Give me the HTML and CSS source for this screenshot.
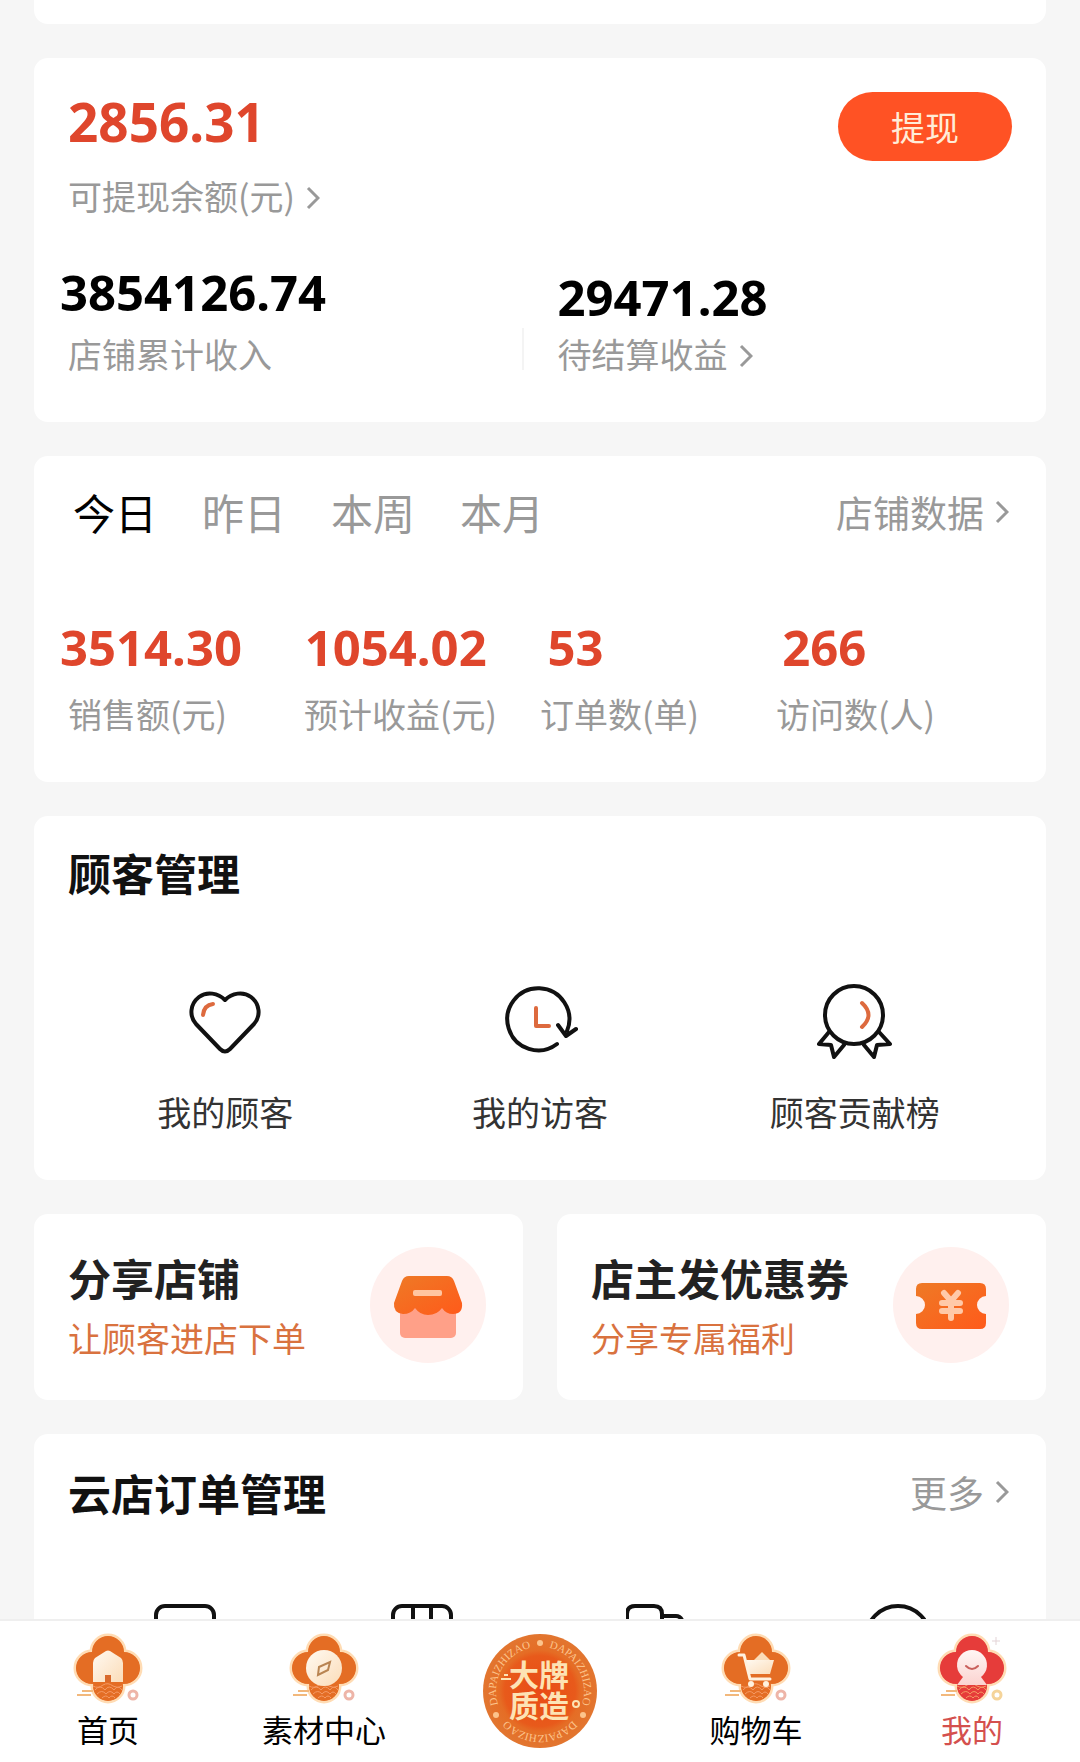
FILE: index.html
```html
<!DOCTYPE html>
<html lang="zh-CN">
<head>
<meta charset="utf-8">
<meta name="viewport" content="width=device-width, initial-scale=1">
<title>我的</title>
<link rel="stylesheet" href="styles.css">
</head>
<body>
<svg class="defs" aria-hidden="true">
  <defs>
    <linearGradient id="cream" x1="0" y1="0" x2="1" y2="1">
      <stop offset="0" stop-color="#fffaf2"/><stop offset="1" stop-color="#fbdcb8"/>
    </linearGradient>
    <linearGradient id="blush" x1="0" y1="0" x2="0" y2="1">
      <stop offset="0" stop-color="#fff6f4"/><stop offset="1" stop-color="#fbd3d0"/>
    </linearGradient>
    <linearGradient id="orange" x1="0" y1="0" x2="1" y2="1">
      <stop offset="0" stop-color="#ee7a26"/><stop offset="1" stop-color="#ff5a1a"/>
    </linearGradient>
    <symbol id="chevron" viewBox="0 0 14 24">
      <path d="M2 2l10 10L2 22" fill="none" stroke="currentColor" stroke-width="3"/>
    </symbol>
    <symbol id="flower" viewBox="0 0 72 72">
      <g fill="currentColor" stroke="#ffdcb4" stroke-width="3">
        <circle cx="36" cy="19" r="17"/><circle cx="20" cy="35" r="17"/><circle cx="52" cy="35" r="17"/><circle cx="36" cy="53" r="16"/>
      </g>
      <g fill="currentColor">
        <circle cx="36" cy="19" r="16"/><circle cx="20" cy="35" r="16"/><circle cx="52" cy="35" r="16"/><circle cx="36" cy="53" r="15"/>
      </g>
      <g fill="none" stroke="#f59a64" stroke-width="1">
        <path d="M23 57q5-6 10 0q4-6 9 0q4-6 8 0M25 61q5-5 9 0q4-5 8 0q3-4 6 0M30 65q4-4 7 0q3-4 6 0M21 53q5 3 10-1q5-3 10 1q5 3 9 0"/>
        <path d="M5 62h14M10 58h11" stroke="#f2b87c" stroke-width="2"/>
      </g>
    </symbol>
  </defs>
</svg>

<main class="content">
  <section class="card card--cut" aria-hidden="true"></section>

  <section class="card card--roomy">
    <div class="balance">
      <div>
        <div class="value value--main">2856.31</div>
        <a class="label balance__label" href="#">可提现余额(元)<svg class="chevron"><use href="#chevron"/></svg></a>
      </div>
      <button class="withdraw" type="button">提现</button>
    </div>
    <div class="totals">
      <div class="totals__item">
        <div class="value value--black outdent">3854126.74</div>
        <div class="label">店铺累计收入</div>
      </div>
      <span class="totals__rule"></span>
      <div class="totals__item totals__item--tight">
        <div class="value value--black">29471.28</div>
        <a class="label" href="#">待结算收益<svg class="chevron"><use href="#chevron"/></svg></a>
      </div>
    </div>
  </section>

  <section class="card">
    <div class="card__head">
      <div class="tabs" role="tablist">
        <button class="tab tab--active" type="button" role="tab" aria-selected="true">今日</button>
        <button class="tab" type="button" role="tab" aria-selected="false">昨日</button>
        <button class="tab" type="button" role="tab" aria-selected="false">本周</button>
        <button class="tab" type="button" role="tab" aria-selected="false">本月</button>
      </div>
      <a class="more" href="#">店铺数据<svg class="chevron"><use href="#chevron"/></svg></a>
    </div>
    <div class="stat-values outdent">
      <div class="value">3514.30</div><div class="value">1054.02</div><div class="value">53</div><div class="value">266</div>
    </div>
    <div class="stat-labels">
      <div class="label">销售额(元)</div><div class="label">预计收益(元)</div><div class="label">订单数(单)</div><div class="label">访问数(人)</div>
    </div>
  </section>

  <section class="card">
    <h2 class="title">顾客管理</h2>
    <div class="entries">
      <a class="entry" href="#">
        <svg class="entry__icon" viewBox="0 0 76 76">
          <path d="M38 16C31 9 20 7 12 13C3 20 2 32 9 40L33 65Q38 70 43 65L67 40C74 32 73 20 64 13C56 7 45 9 38 16Z"/>
          <path d="M16 31Q17 21 26 20" stroke="#dd6a3e"/>
        </svg>
        <span>我的顾客</span>
      </a>
      <a class="entry" href="#">
        <svg class="entry__icon" viewBox="0 0 76 76">
          <path d="M55 60A31 31 0 1 1 65 47M56 41l8 11 10-7"/>
          <path d="M34 24v18h13" stroke="#dd6a3e"/>
        </svg>
        <span>我的访客</span>
      </a>
      <a class="entry" href="#">
        <svg class="entry__icon" viewBox="0 0 76 76">
          <circle cx="37" cy="31" r="29"/>
          <path d="M12 48L2 60l12 1 3 12 10-12M62 48l11 12-13 1-3 12-10-12"/>
          <path d="M45 19Q58 31 45 43" stroke="#dd6a3e"/>
        </svg>
        <span>顾客贡献榜</span>
      </a>
    </div>
  </section>

  <div class="share">
    <a class="card share__card" href="#">
      <span><strong class="title share__title">分享店铺</strong><span class="share__note">让顾客进店下单</span></span>
      <svg class="share__icon" viewBox="0 0 118 118">
        <circle cx="59" cy="59" r="58" fill="#fff0ee"/>
        <rect x="31" y="50" width="56" height="42" rx="5" fill="#ffa088"/>
        <path d="M40 30H78Q83 30 85 35L93 57Q94 68 84 68Q77 68 73 62Q68 69 59 69Q51 69 46 62Q42 68 34 68Q24 67 25 57L33 35Q35 30 40 30Z" fill="url(#orange)"/>
        <rect x="44" y="44" width="29" height="6" rx="2" fill="#ffc5a0"/>
      </svg>
    </a>
    <a class="card share__card" href="#">
      <span><strong class="title share__title">店主发优惠券</strong><span class="share__note">分享专属福利</span></span>
      <svg class="share__icon" viewBox="0 0 118 118">
        <circle cx="59" cy="59" r="58" fill="#fff0ee"/>
        <path d="M30 37H88Q94 37 94 43V50A9 9 0 0 0 94 68V77Q94 83 88 83H30Q24 83 24 77V68A9 9 0 0 0 24 50V43Q24 37 30 37Z" fill="url(#orange)"/>
        <path d="M52 47L59 55L66 47M59 56V72M50 57H68M50 65H68" fill="none" stroke="#ffc9a8" stroke-width="6" stroke-linecap="round"/>
      </svg>
    </a>
  </div>

  <section class="card card--roomy">
    <div class="card__head">
      <h2 class="title">云店订单管理</h2>
      <a class="more" href="#">更多<svg class="chevron"><use href="#chevron"/></svg></a>
    </div>
    <div class="orders">
      <svg class="orders__icon" viewBox="0 0 64 64"><rect x="2" y="2" width="58" height="58" rx="9"/></svg>
      <svg class="orders__icon" viewBox="0 0 64 64"><rect x="3" y="2" width="58" height="58" rx="9"/><path d="M23 2v26M41 2v26"/></svg>
      <svg class="orders__icon" viewBox="0 0 64 64"><path d="M36 50H1V10Q1 2 9 2H28Q36 2 36 10V50M36 12H50Q54 12 56 16L60 30V50H36"/></svg>
      <svg class="orders__icon" viewBox="0 0 64 64"><circle cx="36" cy="34" r="32"/></svg>
    </div>
  </section>
</main>

<nav class="tabbar">
  <a class="tabbar__item" href="#">
    <svg class="tabbar__icon" viewBox="0 0 72 72">
      <use href="#flower"/>
      <path d="M21 30Q21 27 23 25L34 18Q36 17 38 18L49 25Q51 27 51 30V49H21Z" fill="url(#cream)"/>
      <path d="M33 49V42H39V49Z" fill="#d96a2c"/>
      <circle cx="61" cy="62" r="4" fill="none" stroke="#eeb5a8" stroke-width="3"/>
    </svg>
    <span>首页</span>
  </a>
  <a class="tabbar__item" href="#">
    <svg class="tabbar__icon" viewBox="0 0 72 72">
      <use href="#flower"/>
      <circle cx="36" cy="35" r="18" fill="url(#cream)"/>
      <path d="M31 34L42 29L40 37L30 42Z" fill="none" stroke="#b98452" stroke-width="2"/>
      <circle cx="61" cy="62" r="4" fill="none" stroke="#eeb5a8" stroke-width="3"/>
    </svg>
    <span>素材中心</span>
  </a>
  <a class="tabbar__item tabbar__item--center" href="#">
    <svg class="badge" viewBox="0 0 116 116" role="img" aria-label="大牌质造">
      <defs>
        <radialGradient id="seal"><stop offset="0" stop-color="#e94b16"/><stop offset="0.62" stop-color="#e85a1b"/><stop offset="0.72" stop-color="#e56d25"/><stop offset="1" stop-color="#e27630"/></radialGradient>
        <path id="arc1" d="M58 14A44 44 0 0 1 96.100 80"/>
        <path id="arc2" d="M96.100 80A44 44 0 0 1 19.900 80"/>
        <path id="arc3" d="M19.900 80A44 44 0 0 1 58 14"/>
      </defs>
      <circle cx="58" cy="58" r="57" fill="url(#seal)"/>
      <g class="badge__ring">
        <text><textPath href="#arc1" startOffset="50%">DAPAIZHIZAO</textPath></text>
        <text><textPath href="#arc2" startOffset="50%">DAPAIZHIZAO</textPath></text>
        <text><textPath href="#arc3" startOffset="50%">DAPAIZHIZAO</textPath></text>
        <circle cx="58" cy="10" r="3"/><circle cx="101" cy="82" r="3"/><circle cx="14" cy="82" r="3"/>
      </g>
      <path d="M19 46h10M22 42h4" stroke="#fde3b4" stroke-width="2"/>
      <circle cx="94" cy="71" r="3" fill="none" stroke="#fde3b4" stroke-width="2"/>
      <text class="badge__name"><tspan x="57" y="53">大牌</tspan><tspan x="57" y="84">质造</tspan></text>
    </svg>
  </a>
  <a class="tabbar__item" href="#">
    <svg class="tabbar__icon" viewBox="0 0 72 72">
      <use href="#flower"/>
      <path d="M34 27L42 19L50 27Z" fill="#fbdcb8"/>
      <path d="M25 27H54L50 41H28Z" fill="url(#cream)"/>
      <path d="M19 22H24L30 46H50" fill="none" stroke="#fff1de" stroke-width="3" stroke-linecap="round" stroke-linejoin="round"/>
      <circle cx="31" cy="51" r="3" fill="#fff1de"/><circle cx="46" cy="51" r="3" fill="#fff1de"/>
      <circle cx="61" cy="62" r="4" fill="none" stroke="#eeb5a8" stroke-width="3"/>
    </svg>
    <span>购物车</span>
  </a>
  <a class="tabbar__item tabbar__item--active" href="#">
    <svg class="tabbar__icon" viewBox="0 0 72 72">
      <use href="#flower"/>
      <path d="M27 44A15 15 0 1 1 45 44L51 52H21Z" fill="url(#blush)"/>
      <path d="M30 33Q36 39 42 33" fill="none" stroke="#c9605c" stroke-width="2" stroke-linecap="round"/>
      <circle cx="61" cy="62" r="4" fill="none" stroke="#f5d49a" stroke-width="3"/>
      <path d="M60 4v8M56 8h8" stroke="#e3d3d6" stroke-width="1"/>
    </svg>
    <span>我的</span>
  </a>
</nav>
</body>
</html>
```
FILE: styles.css
```css
* {
  box-sizing: border-box;
}

body {
  margin: 0;
  height: 100vh;
  display: flex;
  flex-direction: column;
  background: #f6f6f6;
  color: #111;
  font-family: "Noto Sans CJK SC", sans-serif;
  font-size: 34px;
  line-height: 40px;
}

a {
  color: inherit;
  text-decoration: none;
}

button {
  padding: 0;
  border: 0;
  background: none;
  font: inherit;
}

.defs {
  position: absolute;
  width: 0;
  height: 0;
}

.content {
  flex: 1;
  min-height: 0;
  overflow: hidden auto;
  scrollbar-width: none;
  display: flex;
  flex-direction: column;
  gap: 34px;
  padding: 0 34px;
}

.card {
  flex: none;
  padding: 32px 34px 48px;
  border-radius: 14px;
  background: #fff;
}

.card--roomy {
  padding-top: 34px;
}

.card--cut {
  padding: 0;
  height: 24px;
  border-radius: 0 0 14px 14px;
}

.card__head {
  display: flex;
  justify-content: space-between;
  align-items: center;
}

.title {
  margin: 0;
  font-size: 43px;
  line-height: 48px;
  font-weight: 700;
}

.value {
  color: #df462c;
  font-family: "Noto Sans", sans-serif;
  font-size: 49px;
  line-height: 60px;
  font-weight: 700;
}

.value--main {
  font-size: 53px;
}

.value--black {
  color: #000;
}

.label,
.more {
  color: #999;
  white-space: nowrap;
}

.more {
  display: flex;
  align-items: center;
  font-size: 37px;
}

.chevron {
  width: 14px;
  height: 24px;
  margin: 0 3px 0 11px;
}

.outdent {
  margin-left: -8px;
}

.balance {
  display: flex;
  justify-content: space-between;
  align-items: flex-start;
}

.balance__label {
  display: block;
  margin-top: 24px;
}

.withdraw {
  width: 174px;
  height: 69px;
  border-radius: 35px;
  background: #ff5224;
  color: #ffecd8;
}

.totals {
  display: grid;
  grid-template-columns: 12fr 2px 13fr;
  column-gap: 34px;
  align-items: end;
  margin-top: 46px;
}

.totals__item {
  display: grid;
  row-gap: 12px;
}

.totals__item--tight {
  row-gap: 7px;
}

.totals__rule {
  height: 42px;
  margin-bottom: 4px;
  background: #f4f4f4;
}

.tabs {
  display: flex;
  gap: 45px;
  margin-left: 5px;
}

.tab {
  color: #999;
  font-size: 42px;
  line-height: 48px;
}

.tab--active {
  color: #000;
}

.stat-values {
  display: grid;
  grid-template-columns: 245fr 243fr 235fr 230fr;
  margin-top: 81px;
}

.stat-labels {
  display: grid;
  grid-template-columns: repeat(4, 1fr);
  margin-top: 17px;
}

.entries {
  display: grid;
  grid-template-columns: repeat(3, 1fr);
  margin-top: 88px;
}

.entry {
  display: flex;
  flex-direction: column;
  align-items: center;
  gap: 32px;
  color: #333;
}

.entry__icon {
  width: 76px;
  height: 76px;
  fill: none;
  stroke: #111;
  stroke-width: 4;
  stroke-linecap: round;
  stroke-linejoin: round;
}

.share {
  flex: none;
  display: grid;
  grid-template-columns: 1fr 1fr;
  gap: 34px;
}

.share__card {
  display: flex;
  justify-content: space-between;
  align-items: center;
  padding: 32px 36px 36px 34px;
}

.share__title,
.share__note {
  display: block;
}

.share__title {
  color: #222;
}

.share__note {
  margin-top: 17px;
  color: #d9723f;
}

.share__icon {
  width: 118px;
  height: 118px;
}

.orders {
  display: grid;
  grid-template-columns: repeat(4, 1fr);
  justify-items: center;
  margin-top: 88px;
}

.orders__icon {
  width: 64px;
  height: 64px;
  fill: none;
  stroke: #111;
  stroke-width: 4;
}

.tabbar {
  flex: none;
  display: grid;
  grid-template-columns: repeat(5, 1fr);
  height: 143px;
  border-top: 2px solid #efefef;
  background: #fff;
  color: #000;
  font-size: 31px;
}

.tabbar__item {
  display: flex;
  flex-direction: column;
  align-items: center;
  gap: 4px;
  padding-top: 12px;
}

.tabbar__icon {
  width: 72px;
  height: 72px;
  color: #e46d24;
}

.tabbar__item--active {
  color: #d4504e;
}

.tabbar__item--active .tabbar__icon {
  color: #e63c3a;
}

.badge {
  width: 116px;
  height: 116px;
}

.badge__ring {
  fill: #fcc48c;
  font-family: "Liberation Serif", serif;
  font-size: 11px;
  text-anchor: middle;
}

.badge__name {
  fill: #fde3b4;
  font-size: 30px;
  font-weight: 700;
  text-anchor: middle;
}
```
